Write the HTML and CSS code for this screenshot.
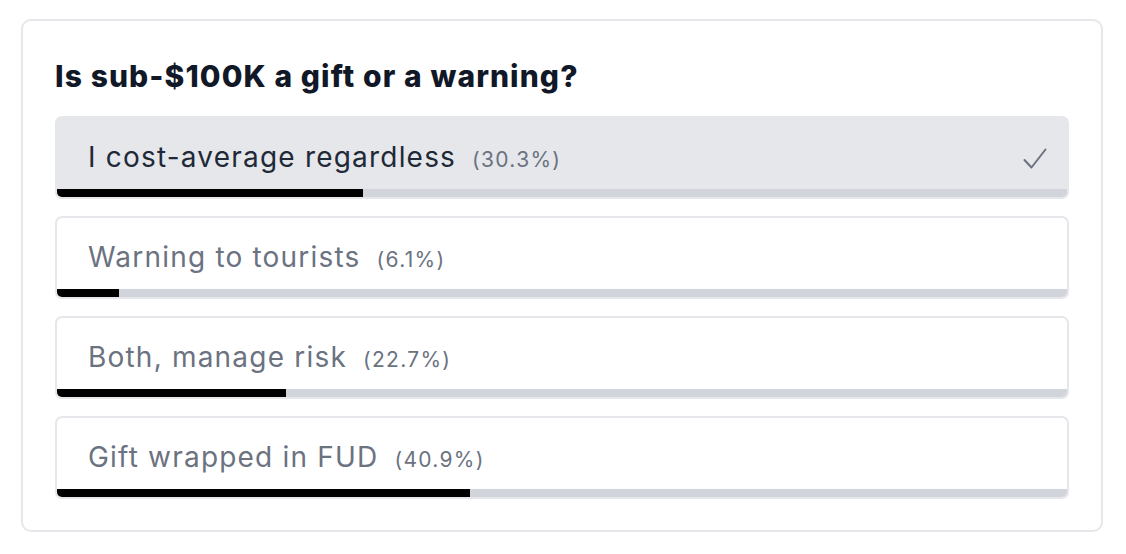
FILE: index.html
```html
<!DOCTYPE html>
<html>
<head>
<meta charset="utf-8">
<link rel="stylesheet" href="styles.css">
</head>
<body>
<div class="card">
  <h2 class="title">Is sub-$100K a gift or a warning?</h2>
  <div class="options">
    <div class="option selected">
      <div class="row">
        <span class="label">I cost-average regardless</span><span class="pct">(30.3%)</span>
        <svg class="check" width="24" height="22" viewBox="0 0 24 22"><path d="M1.5 12 L8.5 19.5 L22.5 1.5" fill="none" stroke="#6b7280" stroke-width="2" stroke-linecap="round" stroke-linejoin="round"/></svg>
      </div>
      <div class="track"><div class="fill" style="width:30.3%"></div></div>
    </div>
    <div class="option">
      <div class="row"><span class="label">Warning to tourists</span><span class="pct">(6.1%)</span></div>
      <div class="track"><div class="fill" style="width:6.1%"></div></div>
    </div>
    <div class="option">
      <div class="row"><span class="label">Both, manage risk</span><span class="pct">(22.7%)</span></div>
      <div class="track"><div class="fill" style="width:22.7%"></div></div>
    </div>
    <div class="option">
      <div class="row"><span class="label">Gift wrapped in FUD</span><span class="pct">(40.9%)</span></div>
      <div class="track"><div class="fill" style="width:40.9%"></div></div>
    </div>
  </div>
</div>
</body>
</html>
```
FILE: styles.css
```css
html, body {
  margin: 0;
  background: #ffffff;
}
body {
  padding: 19px 23px 0 21px;
  font-family: Inter, "Noto Sans", sans-serif;
}
.card {
  width: 1082px;
  box-sizing: border-box;
  border: 2px solid #e5e7eb;
  border-radius: 10px;
  padding: 37px 32px 31px 32px;
}
.title {
  margin: 0 0 22px 0;
  font-size: 30px;
  font-weight: 800;
  line-height: 36px;
  letter-spacing: 1.1px;
  color: #111827;
}
.options {
  display: flex;
  flex-direction: column;
  gap: 17px;
}
.option {
  height: 83px;
  box-sizing: border-box;
  border: 2px solid #e5e7eb;
  border-radius: 7px;
  overflow: hidden;
  display: flex;
  flex-direction: column;
  background: #ffffff;
}
.option.selected {
  background: #e5e7eb;
}
.row {
  flex: 1;
  display: flex;
  align-items: baseline;
  padding: 22px 20px 0 31px;
}
.label {
  font-size: 28px;
  color: #6b7280;
  line-height: 34px;
  letter-spacing: 1.2px;
}
.selected .label {
  color: #1f2937;
}
.pct {
  margin-left: 16px;
  font-size: 21px;
  color: #6b7280;
  letter-spacing: 1.3px;
}
.check {
  margin-left: auto;
  align-self: flex-start;
  margin-top: 8px;
}
.track {
  height: 8px;
  background: #d1d5db;
  flex: none;
}
.fill {
  height: 100%;
  background: #000000;
}
```
